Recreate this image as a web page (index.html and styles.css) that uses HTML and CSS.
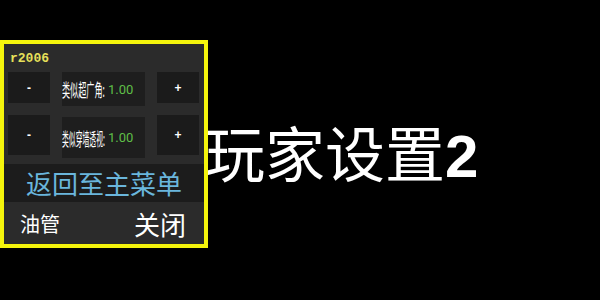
FILE: index.html
```html
<!DOCTYPE html>
<html lang="zh-CN">
<head>
  <meta charset="UTF-8" />
  <title>玩家设置2</title>
  <link rel="stylesheet" href="styles.css">
</head>
<body>
  <div class="scene">
    <div class="menu">
      <div class="menu-title">r2006</div>
      <div class="setting">
        <button class="step">-</button>
        <div class="field">
          <span class="label label-5">类似超广角:</span>
          <span class="value">1.00</span>
        </div>
        <button class="step">+</button>
      </div>
      <div class="setting setting-tall">
        <button class="step">-</button>
        <div class="field">
          <span class="label label-6">类似穿墙透视:</span>
          <span class="value">1.00</span>
        </div>
        <button class="step">+</button>
      </div>
      <div class="back">返回至主菜单</div>
      <div class="footer">
        <span class="link">油管</span>
        <span class="close">关闭</span>
      </div>
    </div>
    <h1 class="headline">玩家设置<b>2</b></h1>
  </div>
</body>
</html>
```

FILE: styles.css
```css
body {
  margin: 0;
  background: #000;
  font-family: "Noto Sans CJK SC", "Noto Sans", sans-serif;
  color: #fff;
}

.scene {
  display: flex;
  align-items: flex-start;
  padding-top: 40px;
  height: 260px;
}

.menu {
  width: 200px;
  height: 200px;
  border: 4px solid #f4f40c;
  background: #2b2b2b;
  display: flex;
  flex-direction: column;
  position: relative;
  z-index: 1;
}

.menu-title {
  font-family: "Liberation Mono", monospace;
  font-weight: bold;
  font-size: 13px;
  color: #e6e05a;
  padding: 7px 0 0 6px;
  height: 21px;
}

.setting {
  display: grid;
  grid-template-columns: 42px 83px 42px;
  column-gap: 12px;
  margin: 0 4px;
  height: 34px;
  align-items: start;
}

.setting-tall {
  margin-top: 9px;
  height: 43px;
}

.step {
  height: 31px;
  border: none;
  padding: 0;
  background: #1b1b1b;
  color: #fff;
  font-family: "Liberation Sans", sans-serif;
  font-weight: bold;
  font-size: 12px;
}

.setting-tall .step {
  height: 40px;
}

.field {
  height: 34px;
  background: #1e1e1e;
  display: flex;
  align-items: center;
  white-space: nowrap;
  overflow: hidden;
}

.setting-tall .field {
  height: 41px;
  margin-top: 2px;
}

/* labels are squeezed sideways to fit the box, as in the game menu */
.label {
  display: inline-block;
  font-size: 18px;
  transform-origin: left center;
}

.label-5 {
  transform: scaleX(0.45);
  margin-right: -49px;
}

.label-6 {
  transform: scaleX(0.38);
  margin-right: -67px;
}

.value {
  font-family: "Roboto", sans-serif;
  font-size: 13px;
  color: #5fbf48;
}

.back {
  margin-top: 6px;
  height: 38px;
  background: #1c1c1c;
  color: #6ab6dc;
  font-size: 26px;
  line-height: 37px;
  text-align: center;
}

.footer {
  flex: 1;
  display: flex;
  justify-content: space-between;
  align-items: center;
  padding: 0 18px 0 16px;
}

.link {
  font-size: 20px;
}

.close {
  font-size: 26px;
}

.headline {
  margin: 81px 0 0 -3px;
  font-size: 60px;
  font-weight: normal;
  line-height: 60px;
  white-space: nowrap;
}

.headline b {
  font-family: "Liberation Sans", sans-serif;
  font-weight: bold;
}
```
